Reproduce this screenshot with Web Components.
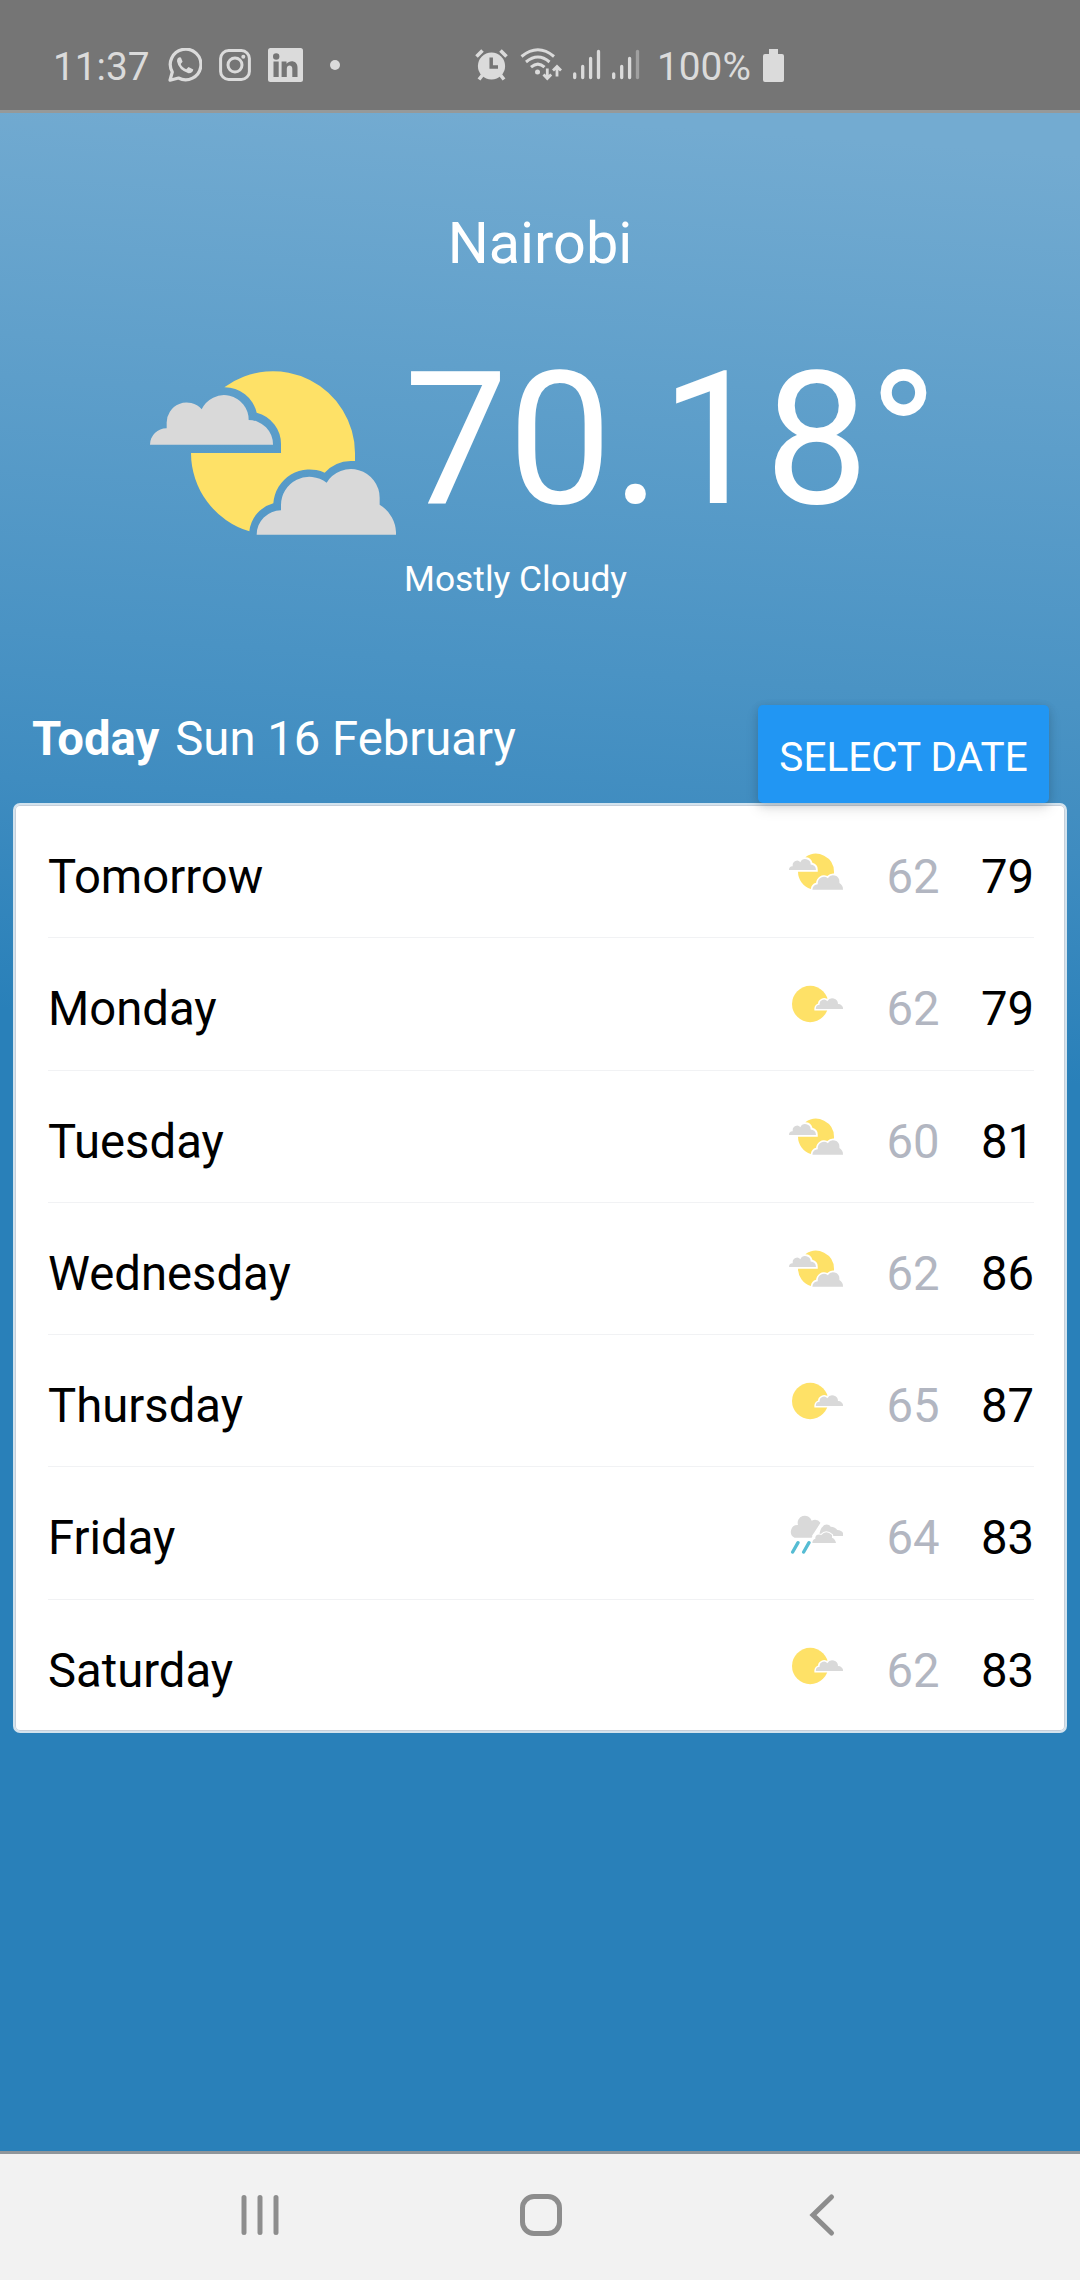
<!DOCTYPE html>
<html lang="en">
<head>
<meta charset="utf-8">
<title>Weather</title>
<style>
html, body { margin: 0; padding: 0; }
body { width: 1080px; height: 2280px; overflow: hidden; font-family: Roboto, "Liberation Sans", sans-serif; }
</style>
</head>
<body>
<weather-app></weather-app>
<script>
const CLOUDY = `
<path fill="#fee167" d="M283 142A246 246 0 0 1 675 339V363H662A110 110 0 0 0 584 398A109 109 0 0 0 430 490A98 98 0 0 0 358 574A246 246 0 0 1 183 339H453V314A97 97 0 0 0 380 218A98 98 0 0 0 283 142Z"/>
<path fill="#d9d9d9" d="M60 314A49 49 0 0 1 110 265V250A60 60 0 0 1 215 208A74 74 0 0 1 356 240A73 73 0 0 1 429 314Z"/>
<path fill="#d9d9d9" d="M380 584A73 73 0 0 1 453 511V496A85 85 0 0 1 590 428A86 86 0 0 1 749 473V494A101 101 0 0 1 798 584Z"/>`;
const ICONS = {
  'mostly-cloudy': ['60 83 738 547', CLOUDY],
  'partly-cloudy': ['57 135 162 120', `
<circle cx="120.5" cy="192" r="54.5" fill="#fee167"/>
<path d="M137.500 207A12 12 0 0 1 149 194.500A13 13 0 0 1 172 184A17 17 0 0 1 204 192A15 15 0 0 1 219.500 207Z" fill="#fff" stroke="#fff" stroke-width="9"/>
<path d="M137.500 207A12 12 0 0 1 149 194.500A13 13 0 0 1 172 184A17 17 0 0 1 204 192A15 15 0 0 1 219.500 207Z" fill="#d9d9d9"/>`],
  'rain': ['57 99 162 120', `
<path fill="#d9d9d9" d="M147 165Q151 141 158 137A14 14 0 0 1 182 137Q196 138 202 147Q215 148 219 156V165Z"/>
<path fill="#d9d9d9" d="M74 170A20 20 0 0 1 84 132A21 21 0 0 1 125 119A22 22 0 0 1 152 126L134 157Q128 161 125 170Z"/>
<path stroke="#fff" stroke-width="7" stroke-linejoin="round" fill="#d9d9d9" d="M127 186Q127 175 136 173V168Q140 158 154 162Q168 146 186 162V170Q196 174 198 186Z"/>
<path stroke="#fff" stroke-width="4" fill="none" d="M128 165L155 124"/>
<path fill="#d9d9d9" d="M127 186Q127 175 136 173V168Q140 158 154 162Q168 146 186 162V170Q196 174 198 186Z"/>
<path stroke="#55bcd3" stroke-width="10" stroke-linecap="round" d="M84 185L68 213M117 185L101 213"/>`]
};

function define(name, html) {
  customElements.define(name, class extends HTMLElement {
    connectedCallback() {
      if (this.shadowRoot) return;
      const root = this.attachShadow({ mode: 'open' });
      root.innerHTML = typeof html === 'function' ? html(this) : html;
    }
  });
}

define('weather-icon', el => {
  const [box, art] = ICONS[el.getAttribute('kind')];
  return `<style>:host{display:block;flex:none}svg{display:block;width:100%;height:100%}</style>
  <svg viewBox="${el.getAttribute('box') || box}">${art}</svg>`;
});

define('status-bar', `
<style>
:host{display:flex;align-items:center;box-sizing:border-box;height:113px;padding:20px 0 0 53px;background:#757575;border-bottom:3px solid #969999;color:#dbdbdb;font-size:38.800px;line-height:46px}
svg{display:block;flex:none}
span{flex:none;white-space:nowrap;position:relative;top:1.500px}
.time{width:115px}
.pct{width:105px}
</style>
<span class="time">11:37</span>
<svg width="34" height="34" viewBox="0 0 34 34"><path d="M2 32.200L4.300 24A15.300 15.300 0 1 1 10.500 30Z" fill="none" stroke="#dbdbdb" stroke-width="3.200" stroke-linejoin="round"/><path d="M11.500 9.300Q9 10 9 13.300Q10.500 22 20.500 25.300Q24.500 25.500 25.300 21.500L20.500 19L18.300 21.200Q14 19.500 12.700 16L14.600 13.700L12.900 9.500Z" fill="#dbdbdb"/></svg>
<svg width="32" height="32" viewBox="0 0 32 32" style="margin-left:17px"><rect x="1.600" y="1.600" width="28.800" height="28.800" rx="8" fill="none" stroke="#dbdbdb" stroke-width="3"/><circle cx="16" cy="16" r="7" fill="none" stroke="#dbdbdb" stroke-width="3"/><circle cx="24.300" cy="7.700" r="2" fill="#dbdbdb"/></svg>
<svg width="35" height="34" viewBox="0 0 35 34" style="margin-left:17px"><rect width="35" height="34" rx="2.500" fill="#dbdbdb"/><g fill="#757575"><circle cx="8.200" cy="8.500" r="3.200"/><path d="M5.500 13.500H10.700V29H5.500ZM13.600 13.500H18.500V15.700C22 11.500 29.500 12.500 29.500 19.500V29H24.300V20.700C24.300 16.500 18.800 16.500 18.800 20.700V29H13.600Z"/></g></svg>
<svg width="10" height="10" viewBox="0 0 10 10" style="margin-left:27px"><circle cx="5" cy="5" r="5" fill="#dbdbdb"/></svg>
<svg width="33" height="32" viewBox="0 0 33 32" style="margin-left:135px"><g stroke="#dbdbdb" stroke-width="3.600"><path d="M1.500 7.500L7.500 1.500M31.500 7.500L25.500 1.500"/><path d="M7.500 26L4 30.500M25.500 26L29 30.500"/></g><circle cx="16.500" cy="17" r="13.600" fill="#dbdbdb"/><path d="M16.200 8.500V18H23" fill="none" stroke="#757575" stroke-width="3.500"/></svg>
<svg width="43" height="34" viewBox="0 0 43 34" style="margin-left:12px"><g fill="none" stroke="#dbdbdb" stroke-width="3"><path d="M1.500 8.500Q18 -5 34 8.500M6 14Q18 4 29.500 14M11 19.200Q18 13 24.500 19.200"/></g><circle cx="17.500" cy="24" r="2.500" fill="#dbdbdb"/><g fill="none" stroke="#dbdbdb" stroke-width="2.800"><path d="M27.300 20.500V30M23.500 26.500L27.300 30.500L31.200 26.500M37 28.500V19M33 22.500L37 18.500L41 22.500"/></g></svg>
<svg width="28" height="32" viewBox="0 0 28 32" style="margin-left:10px"><path stroke="#dbdbdb" stroke-width="3.300" stroke-linecap="round" d="M1.700 25V28.500M9.700 17.500V28.500M17.600 9.500V28.500M25.500 2.500V28.500"/></svg>
<svg width="28" height="32" viewBox="0 0 28 32" style="margin-left:11px"><path stroke="#dbdbdb" stroke-width="3.300" stroke-linecap="round" d="M1.700 25V28.500M9.700 17.500V28.500M17.600 9.500V28.500"/><path stroke="#a0a0a0" stroke-width="3.300" stroke-linecap="round" d="M25.500 2.500V28.500"/></svg>
<span class="pct" style="margin-left:17px">100%</span>
<svg width="21" height="33" viewBox="0 0 21 33" style="margin-left:1px"><path fill="#dbdbdb" d="M6 0H15V5H19A2 2 0 0 1 21 7V31A2 2 0 0 1 19 33H2A2 2 0 0 1 0 31V7A2 2 0 0 1 2 5H6Z"/></svg>
`);

define('current-weather', `
<style>
:host{display:flex;flex-direction:column;color:#fff;height:592px}
.city{margin-top:97px;text-align:center;font-size:57.600px;line-height:68px}
.now{display:flex;margin-top:62px;padding-left:150px;height:240px;align-items:flex-start}
weather-icon{width:246px;height:164px;margin-top:31px}
.col{margin-left:8px;display:flex;flex-direction:column;white-space:nowrap}
.temp{font-size:185px;line-height:200px}
.desc{font-size:35.400px;line-height:42px;margin-top:18px}
</style>
<div class="city"><slot name="city"></slot></div>
<div class="now">
<weather-icon kind="mostly-cloudy" box="60 93 738 492"></weather-icon>
<div class="col"><div class="temp"><slot name="temp"></slot></div><div class="desc"><slot name="desc"></slot></div></div>
</div>`);

define('date-header', `
<style>
:host{display:flex;justify-content:space-between;align-items:flex-start;height:98px;padding:0 31px 0 32px;position:relative;z-index:1;color:#fff}
.date{font-size:47.250px;line-height:69px;white-space:nowrap}
b{font-weight:700;margin-right:16px}
button{all:unset;box-sizing:border-box;width:291px;height:98px;border-radius:5px;background:#2196f3;box-shadow:0 6px 14px rgba(0,0,0,.1),0 2px 8px rgba(0,0,0,.12);text-align:center;font-size:40.500px;line-height:46px;padding:5px 0 0;white-space:nowrap}
</style>
<div class="date"><b>Today</b><slot></slot></div><button>SELECT DATE</button>`);

define('forecast-row', el => `
<style>
:host{display:flex;align-items:center;box-sizing:border-box;height:132.250px;padding-top:11px;border-bottom:1px solid #f1f2f4;font-size:47.250px;line-height:56px;color:#000}
:host([last]){border-color:transparent;height:132px;padding-top:12px}
.day{flex:1}
weather-icon{width:54px;height:40px;margin-bottom:8px}
.lo,.hi{width:54px;text-align:right}
.lo{margin-left:42.500px;color:#b2b6c1}
.hi{margin-left:40.500px}
</style>
<span class="day">${el.getAttribute('day')}</span>
<weather-icon kind="${el.getAttribute('icon')}"></weather-icon>
<span class="lo">${el.getAttribute('low')}</span><span class="hi">${el.getAttribute('high')}</span>`);

define('forecast-card', `
<style>
:host{display:block;box-sizing:border-box;margin:0 13px;height:930px;padding:1px 31px 0 33px;background:#fff;border:2px solid #d3e3ee;border-radius:7px;box-shadow:inset 0 0 0 1px #c6cfda}
</style><slot></slot>`);

define('nav-bar', `
<style>
:host{display:flex;justify-content:center;align-items:center;box-sizing:border-box;height:129px;border-top:3px solid #8f969b;background:#f2f2f2;padding-left:2px}
svg{display:block;margin:0 118.700px;width:44px;height:44px;fill:none;stroke:#8d8d8d;stroke-width:5;position:relative;top:-2px}
</style>
<svg viewBox="0 0 44 44"><path stroke-linecap="round" d="M6 4.500V39.500M22 4.500V39.500M38 4.500V39.500"/></svg>
<svg viewBox="0 0 44 44"><rect x="3.500" y="3.500" width="37" height="37" rx="11.500"/></svg>
<svg viewBox="0 0 44 44"><path stroke-linecap="round" d="M31.500 4L13 22L31.500 40"/></svg>`);

define('weather-app', `
<style>
:host{display:flex;flex-direction:column;width:1080px;height:2280px}
main{flex:1;background:linear-gradient(184deg,#73abd1 2%,#4a93c4 28%,#3f8cc0 35%,#2980b9 46%,#2980b9 100%)}
</style>
<status-bar></status-bar>
<main>
<current-weather><span slot="city">Nairobi</span><span slot="temp">70.18°</span><span slot="desc">Mostly Cloudy</span></current-weather>
<date-header>Sun 16 February</date-header>
<forecast-card>
<forecast-row day="Tomorrow" icon="mostly-cloudy" low="62" high="79"></forecast-row>
<forecast-row day="Monday" icon="partly-cloudy" low="62" high="79"></forecast-row>
<forecast-row day="Tuesday" icon="mostly-cloudy" low="60" high="81"></forecast-row>
<forecast-row day="Wednesday" icon="mostly-cloudy" low="62" high="86"></forecast-row>
<forecast-row day="Thursday" icon="partly-cloudy" low="65" high="87"></forecast-row>
<forecast-row day="Friday" icon="rain" low="64" high="83"></forecast-row>
<forecast-row last day="Saturday" icon="partly-cloudy" low="62" high="83"></forecast-row>
</forecast-card>
</main>
<nav-bar></nav-bar>`);
</script>
</body>
</html>
